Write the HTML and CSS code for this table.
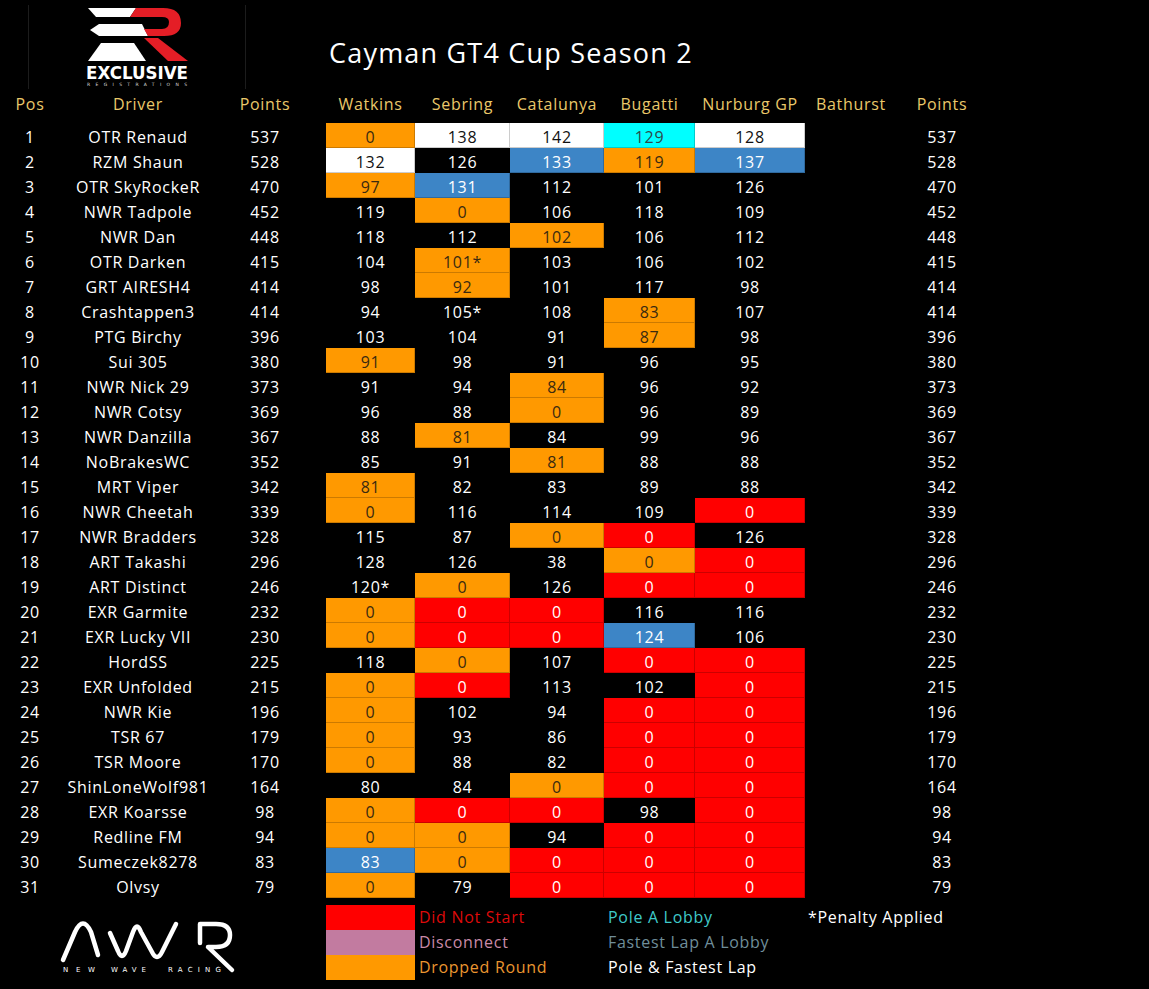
FILE: index.html
```html
<!DOCTYPE html>
<html lang="en">
<head>
<meta charset="utf-8">
<title>Cayman GT4 Cup Season 2</title>
<link rel="stylesheet" href="styles.css">
</head>
<body>
<div class="page">
  <header class="top">
    <div class="logo-box">
      <svg class="exr" viewBox="0 0 110 86" width="110" height="86" aria-label="Exclusive Registrations">
        <polygon fill="#fff" points="4,3 52,3 46,12 12,12"/>
        <polygon fill="#fff" points="6,25 15,19 58,19 64,31 15,31"/>
        <polygon fill="#fff" points="17,38 50,38 62,56 4,56"/>
        <path fill="#e41e26" d="M52,3 L79,3 Q97,3 97,18 Q97,31 80,31 L64,31 L60,24 L78,24 Q85,24 85,17 Q85,12 78,12 L46,12 Z"/>
        <polygon fill="#e41e26" points="60,33 74,33 104,56 84,56"/>
        <text class="exr-big" x="2" y="74" textLength="102" lengthAdjust="spacingAndGlyphs">EXCLUSIVE</text>
        <text class="exr-small" x="3" y="81" textLength="100" lengthAdjust="spacing">REGISTRATIONS</text>
      </svg>
    </div>
    <h1 class="title">Cayman GT4 Cup Season 2</h1>
  </header>

  <div class="table">
    <div class="row head">
      <span>Pos</span><span>Driver</span><span>Points</span><span></span>
      <span>Watkins</span><span>Sebring</span><span>Catalunya</span><span>Bugatti</span><span>Nurburg GP</span><span>Bathurst</span><span>Points</span>
    </div>
    <div class="row"><span>1</span><span>OTR Renaud</span><span>537</span><span></span><span class="o">0</span><span class="w">138</span><span class="w">142</span><span class="c">129</span><span class="w">128</span><span></span><span>537</span></div>
    <div class="row"><span>2</span><span>RZM Shaun</span><span>528</span><span></span><span class="w">132</span><span>126</span><span class="b">133</span><span class="o">119</span><span class="b">137</span><span></span><span>528</span></div>
    <div class="row"><span>3</span><span>OTR SkyRockeR</span><span>470</span><span></span><span class="o">97</span><span class="b">131</span><span>112</span><span>101</span><span>126</span><span></span><span>470</span></div>
    <div class="row"><span>4</span><span>NWR Tadpole</span><span>452</span><span></span><span>119</span><span class="o">0</span><span>106</span><span>118</span><span>109</span><span></span><span>452</span></div>
    <div class="row"><span>5</span><span>NWR Dan</span><span>448</span><span></span><span>118</span><span>112</span><span class="o">102</span><span>106</span><span>112</span><span></span><span>448</span></div>
    <div class="row"><span>6</span><span>OTR Darken</span><span>415</span><span></span><span>104</span><span class="o">101*</span><span>103</span><span>106</span><span>102</span><span></span><span>415</span></div>
    <div class="row"><span>7</span><span>GRT AIRESH4</span><span>414</span><span></span><span>98</span><span class="o">92</span><span>101</span><span>117</span><span>98</span><span></span><span>414</span></div>
    <div class="row"><span>8</span><span>Crashtappen3</span><span>414</span><span></span><span>94</span><span>105*</span><span>108</span><span class="o">83</span><span>107</span><span></span><span>414</span></div>
    <div class="row"><span>9</span><span>PTG Birchy</span><span>396</span><span></span><span>103</span><span>104</span><span>91</span><span class="o">87</span><span>98</span><span></span><span>396</span></div>
    <div class="row"><span>10</span><span>Sui 305</span><span>380</span><span></span><span class="o">91</span><span>98</span><span>91</span><span>96</span><span>95</span><span></span><span>380</span></div>
    <div class="row"><span>11</span><span>NWR Nick 29</span><span>373</span><span></span><span>91</span><span>94</span><span class="o">84</span><span>96</span><span>92</span><span></span><span>373</span></div>
    <div class="row"><span>12</span><span>NWR Cotsy</span><span>369</span><span></span><span>96</span><span>88</span><span class="o">0</span><span>96</span><span>89</span><span></span><span>369</span></div>
    <div class="row"><span>13</span><span>NWR Danzilla</span><span>367</span><span></span><span>88</span><span class="o">81</span><span>84</span><span>99</span><span>96</span><span></span><span>367</span></div>
    <div class="row"><span>14</span><span>NoBrakesWC</span><span>352</span><span></span><span>85</span><span>91</span><span class="o">81</span><span>88</span><span>88</span><span></span><span>352</span></div>
    <div class="row"><span>15</span><span>MRT Viper</span><span>342</span><span></span><span class="o">81</span><span>82</span><span>83</span><span>89</span><span>88</span><span></span><span>342</span></div>
    <div class="row"><span>16</span><span>NWR Cheetah</span><span>339</span><span></span><span class="o">0</span><span>116</span><span>114</span><span>109</span><span class="r">0</span><span></span><span>339</span></div>
    <div class="row"><span>17</span><span>NWR Bradders</span><span>328</span><span></span><span>115</span><span>87</span><span class="o">0</span><span class="r">0</span><span>126</span><span></span><span>328</span></div>
    <div class="row"><span>18</span><span>ART Takashi</span><span>296</span><span></span><span>128</span><span>126</span><span>38</span><span class="o">0</span><span class="r">0</span><span></span><span>296</span></div>
    <div class="row"><span>19</span><span>ART Distinct</span><span>246</span><span></span><span>120*</span><span class="o">0</span><span>126</span><span class="r">0</span><span class="r">0</span><span></span><span>246</span></div>
    <div class="row"><span>20</span><span>EXR Garmite</span><span>232</span><span></span><span class="o">0</span><span class="r">0</span><span class="r">0</span><span>116</span><span>116</span><span></span><span>232</span></div>
    <div class="row"><span>21</span><span>EXR Lucky VII</span><span>230</span><span></span><span class="o">0</span><span class="r">0</span><span class="r">0</span><span class="b">124</span><span>106</span><span></span><span>230</span></div>
    <div class="row"><span>22</span><span>HordSS</span><span>225</span><span></span><span>118</span><span class="o">0</span><span>107</span><span class="r">0</span><span class="r">0</span><span></span><span>225</span></div>
    <div class="row"><span>23</span><span>EXR Unfolded</span><span>215</span><span></span><span class="o">0</span><span class="r">0</span><span>113</span><span>102</span><span class="r">0</span><span></span><span>215</span></div>
    <div class="row"><span>24</span><span>NWR Kie</span><span>196</span><span></span><span class="o">0</span><span>102</span><span>94</span><span class="r">0</span><span class="r">0</span><span></span><span>196</span></div>
    <div class="row"><span>25</span><span>TSR 67</span><span>179</span><span></span><span class="o">0</span><span>93</span><span>86</span><span class="r">0</span><span class="r">0</span><span></span><span>179</span></div>
    <div class="row"><span>26</span><span>TSR Moore</span><span>170</span><span></span><span class="o">0</span><span>88</span><span>82</span><span class="r">0</span><span class="r">0</span><span></span><span>170</span></div>
    <div class="row"><span>27</span><span>ShinLoneWolf981</span><span>164</span><span></span><span>80</span><span>84</span><span class="o">0</span><span class="r">0</span><span class="r">0</span><span></span><span>164</span></div>
    <div class="row"><span>28</span><span>EXR Koarsse</span><span>98</span><span></span><span class="o">0</span><span class="r">0</span><span class="r">0</span><span>98</span><span class="r">0</span><span></span><span>98</span></div>
    <div class="row"><span>29</span><span>Redline FM</span><span>94</span><span></span><span class="o">0</span><span class="o">0</span><span>94</span><span class="r">0</span><span class="r">0</span><span></span><span>94</span></div>
    <div class="row"><span>30</span><span>Sumeczek8278</span><span>83</span><span></span><span class="b">83</span><span class="o">0</span><span class="r">0</span><span class="r">0</span><span class="r">0</span><span></span><span>83</span></div>
    <div class="row"><span>31</span><span>Olvsy</span><span>79</span><span></span><span class="o">0</span><span>79</span><span class="r">0</span><span class="r">0</span><span class="r">0</span><span></span><span>79</span></div>
  </div>

  <footer class="legend">
    <div class="nwr-box">
      <svg class="nwr" viewBox="0 0 185 62" width="185" height="62" aria-label="New Wave Racing">
        <g fill="none" stroke="#fff" stroke-width="4.5" stroke-linecap="round" stroke-linejoin="round">
          <path d="M5,45 L17,17 Q25,0 33,17 L40,40"/>
          <path d="M52,18 L60,36 Q64,46 68,36 L75,17 Q79,6 83,17 L94,37 Q99,47 104,37 L118,9"/>
          <path d="M142,28 L142,9 L158,9 Q172,9 172,20 Q172,32 158,32 L150,32 L174,55"/>
        </g>
        <text class="nwr-text" x="5" y="57" textLength="32" lengthAdjust="spacing">NEW</text>
        <text class="nwr-text" x="53" y="57" textLength="35" lengthAdjust="spacing">WAVE</text>
        <text class="nwr-text" x="110" y="57" textLength="53" lengthAdjust="spacing">RACING</text>
      </svg>
    </div>
    <div class="swatches">
      <div class="sw r"></div>
      <div class="sw p"></div>
      <div class="sw o"></div>
    </div>
    <div class="lg-col lg-1">
      <span class="t-red">Did Not Start</span>
      <span class="t-pink">Disconnect</span>
      <span class="t-orange">Dropped Round</span>
    </div>
    <div class="lg-col lg-2">
      <span class="t-cyan">Pole A Lobby</span>
      <span class="t-grey">Fastest Lap A Lobby</span>
      <span class="t-white">Pole &amp; Fastest Lap</span>
    </div>
    <div class="lg-col lg-3">
      <span class="t-white">*Penalty Applied</span>
    </div>
  </footer>
</div>
</body>
</html>
```

FILE: styles.css
```css
* { box-sizing: border-box; }
html, body {
  margin: 0;
  padding: 0;
  background: #000;
}
body {
  width: 1149px;
  height: 989px;
  overflow: hidden;
  font-family: "Open Sans", "Noto Sans", "DejaVu Sans", sans-serif;
  color: #fff;
}
.page {
  width: 1149px;
  height: 989px;
}
.top {
  height: 92px;
  display: flex;
  align-items: flex-start;
}
.logo-box {
  margin-left: 28px;
  margin-top: 5px;
  width: 218px;
  height: 84px;
  border-left: 1px solid #1c1c1c;
  border-right: 1px solid #1c1c1c;
  display: flex;
  justify-content: center;
}
.exr { display: block; margin-top: 0; margin-left: 4px; }
.exr-big {
  font-family: "DejaVu Sans", sans-serif;
  font-weight: 900;
  font-size: 17px;
  fill: #fff;
}
.exr-small {
  font-family: "DejaVu Sans", sans-serif;
  font-size: 4.5px;
  fill: #ddd;
}
.title {
  margin: 35px 0 0 83px;
  font-weight: 400;
  font-size: 27px;
  line-height: 36px;
  letter-spacing: 1.2px;
  color: #fff;
}
.table {
  display: flex;
  flex-direction: column;
}
.row {
  display: grid;
  grid-template-columns: 60px 156px 98px 12px 89px 95px 94px 91px 110px 92px 90px;
  height: 25px;
  font-size: 16px;
  letter-spacing: 0.7px;
  text-align: center;
  white-space: nowrap;
}
.row span {
  display: block;
  height: 25px;
  padding-top: 3px;
  line-height: 22px;
}
.row.head {
  color: #eac86a;
  margin-bottom: 6px;
}
.row.head span {
  padding-top: 0;
  line-height: 25px;
}
.row .o, .row .w, .row .c, .row .b, .row .r {
  box-shadow: inset -1px -1px 0 rgba(0,0,0,0.2);
}
.o { background: #ff9900; color: #3a2a10; }
.w { background: #ffffff; color: #111; }
.c { background: #00ffff; color: #2d4a4a; }
.b { background: #3d85c6; color: #fff; }
.r { background: #ff0000; color: #fff; }
.p { background: #c27ba0; }

.legend {
  margin-top: 7px;
  display: flex;
  align-items: flex-start;
}
.nwr-box {
  width: 326px;
  height: 75px;
  padding: 10px 0 0 58px;
}
.nwr { display: block; }
.nwr-text {
  font-family: "DejaVu Sans", sans-serif;
  font-size: 7px;
  fill: #fff;
}
.swatches {
  width: 89px;
  display: flex;
  flex-direction: column;
}
.sw { height: 25px; }
.lg-col {
  display: flex;
  flex-direction: column;
  font-size: 16px;
  letter-spacing: 0.7px;
  line-height: 25px;
  white-space: nowrap;
}
.lg-1 { width: 193px; padding-left: 4px; }
.lg-2 { width: 200px; }
.t-red { color: #dd0a0a; }
.t-pink { color: #c98aa8; }
.t-orange { color: #eb9630; }
.t-cyan { color: #3fcaca; }
.t-grey { color: #6f8e9a; }
.t-white { color: #fff; }
```
